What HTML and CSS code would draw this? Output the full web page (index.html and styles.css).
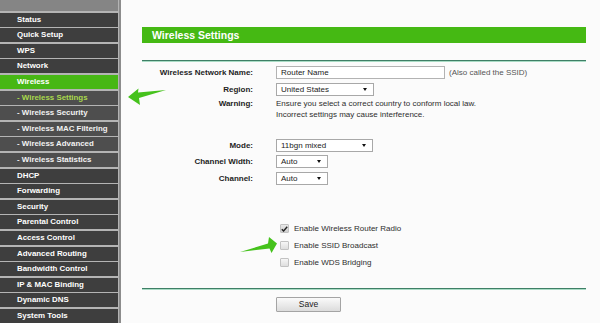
FILE: index.html
```html
<!DOCTYPE html>
<html lang="en">
<head>
    <meta charset="UTF-8">
    <title>Wireless Settings</title>
    <link rel="stylesheet" href="styles.css">
</head>
<body>
    <div class="page">
        <nav class="sidebar">
            <div class="sidebar-top"></div>
            <a class="menu-item">Status</a>
            <a class="menu-item">Quick Setup</a>
            <a class="menu-item">WPS</a>
            <a class="menu-item">Network</a>
            <a class="menu-item active">Wireless</a>
            <a class="menu-item sub current">- Wireless Settings</a>
            <a class="menu-item sub">- Wireless Security</a>
            <a class="menu-item sub">- Wireless MAC Filtering</a>
            <a class="menu-item sub">- Wireless Advanced</a>
            <a class="menu-item sub">- Wireless Statistics</a>
            <a class="menu-item">DHCP</a>
            <a class="menu-item">Forwarding</a>
            <a class="menu-item">Security</a>
            <a class="menu-item">Parental Control</a>
            <a class="menu-item">Access Control</a>
            <a class="menu-item">Advanced Routing</a>
            <a class="menu-item">Bandwidth Control</a>
            <a class="menu-item">IP &amp; MAC Binding</a>
            <a class="menu-item">Dynamic DNS</a>
            <a class="menu-item">System Tools</a>
        </nav>

        <main class="content">
            <div class="title-bar">Wireless Settings</div>
            <div class="divider"></div>

            <div class="row row-name">
                <label class="label">Wireless Network Name:</label>
                <div class="field">
                    <div class="text-input">Router Name</div>
                    <span class="hint">(Also called the SSID)</span>
                </div>
            </div>
            <div class="row row-region">
                <label class="label">Region:</label>
                <div class="field">
                    <div class="select w-region">United States<span class="caret"></span></div>
                </div>
            </div>
            <div class="row row-warning">
                <label class="label">Warning:</label>
                <div class="field warning-text">
                    Ensure you select a correct country to conform local law.<br>
                    Incorrect settings may cause interference.
                </div>
            </div>

            <div class="row row-mode">
                <label class="label">Mode:</label>
                <div class="field">
                    <div class="select w-mode">11bgn mixed<span class="caret"></span></div>
                </div>
            </div>
            <div class="row row-width">
                <label class="label">Channel Width:</label>
                <div class="field">
                    <div class="select w-small">Auto<span class="caret"></span></div>
                </div>
            </div>
            <div class="row row-channel">
                <label class="label">Channel:</label>
                <div class="field">
                    <div class="select w-small">Auto<span class="caret"></span></div>
                </div>
            </div>

            <div class="checks">
                <div class="check-row">
                    <span class="checkbox checked">
                        <svg width="7" height="6" viewBox="0 0 7 6"><path d="M0.8 3.2 L2.6 5 L6.2 0.8" fill="none" stroke="#222" stroke-width="1.4"/></svg>
                    </span>
                    Enable Wireless Router Radio
                </div>
                <div class="check-row">
                    <span class="checkbox"></span>
                    Enable SSID Broadcast
                </div>
                <div class="check-row">
                    <span class="checkbox"></span>
                    Enable WDS Bridging
                </div>
            </div>

            <div class="divider bottom"></div>

            <div class="actions">
                <button class="save-btn">Save</button>
            </div>
        </main>

        <!-- green pointer arrows drawn over the page -->
        <svg class="arrow arrow-menu" width="44" height="22" viewBox="0 0 44 22">
            <path d="M0 9 L10.5 0.5 L10 4.5 L38 2 L11 10 L12 17 Z" fill="#45c21c"/>
        </svg>
        <svg class="arrow arrow-ssid" width="40" height="20" viewBox="0 0 40 20">
            <path d="M0 16 L28 7.5 L29 1 L37 7.5 L31.5 17 L29.5 12.5 Z" fill="#45c21c"/>
        </svg>
    </div>
</body>
</html>
```

FILE: styles.css
```css
/* router admin page - wireless settings */
body {
    margin: 0;
    font-family: "Liberation Sans", Arial, sans-serif;
    background-color: #fbfbfb;
}

.page {
    position: relative;
    display: flex;
    height: 323px;
    overflow: hidden;
}

/* left menu */
.sidebar {
    width: 118px;
    flex-shrink: 0;
    display: flex;
    flex-direction: column;
    background-color: #b4b4b4; /* shows through as separators */
    padding-right: 1px;
    border-right: 2px solid #8c8c8c;
}

.sidebar-top {
    height: 11px;
    flex-shrink: 0;
    background-color: #858585;
}

.menu-item {
    display: block;
    flex-shrink: 0;
    height: 14px;
    margin-top: 1.6px;
    padding-left: 17px;
    line-height: 14px;
    font-size: 7.9px;
    font-weight: bold;
    color: #fff;
    background-color: #3e3e3e;
    white-space: nowrap;
}

.menu-item.sub {
    background-color: #4e4e4e;
    color: #f2f2f2;
}

.menu-item.active {
    background-color: #47b714;
}

.menu-item.current {
    color: #a9d94c;
}

/* right side */
.content {
    flex: 1;
    padding: 27px 14px 0 21px;
}

.title-bar {
    height: 16px;
    line-height: 16px;
    padding-left: 10px;
    background-color: #45b913;
    color: #fff;
    font-size: 10.5px;
    font-weight: bold;
}

.divider {
    margin-top: 17px;
    height: 1px;
    background-color: #3f7f66;
    border-bottom: 1px solid #a9dcc5;
}

.divider.bottom {
    margin-top: 17px;
}

.row {
    display: flex;
    align-items: flex-start;
    font-size: 8px;
    line-height: 13px;
}

.label {
    width: 111px;
    flex-shrink: 0;
    text-align: right;
    font-weight: bold;
    color: #1e1e1e;
}

.field {
    margin-left: 23px;
    display: flex;
    align-items: center;
    color: #2e2e2e;
}

.row-name { margin-top: 4px; }
.row-region { margin-top: 4px; }
.row-warning { margin-top: 2px; line-height: 11px; }
.row-mode { margin-top: 19px; }
.row-width { margin-top: 3px; }
.row-channel { margin-top: 4px; }

.warning-text {
    display: block;
    line-height: 11px;
}

.text-input {
    box-sizing: border-box;
    width: 169px;
    height: 13px;
    line-height: 11px;
    padding-left: 4px;
    border: 1px solid #b3b3b3;
    background-color: #fff;
    color: #222;
}

.hint {
    margin-left: 4px;
    color: #555;
}

.select {
    position: relative;
    box-sizing: border-box;
    height: 13px;
    line-height: 11px;
    padding-left: 4px;
    border: 1px solid #a8a8a8;
    background-color: #fff;
    color: #222;
}

.w-region { width: 98px; }
.w-mode { width: 97px; }
.w-small { width: 52px; }

.caret {
    position: absolute;
    right: 6px;
    top: 4px;
    width: 0;
    height: 0;
    border-left: 2px solid transparent;
    border-right: 2px solid transparent;
    border-top: 3px solid #111;
}

/* checkboxes */
.checks {
    margin-top: 35px;
    margin-left: 138px;
}

.check-row {
    display: flex;
    align-items: center;
    height: 17px;
    font-size: 8px;
    color: #2e2e2e;
}

.checkbox {
    box-sizing: border-box;
    width: 9px;
    height: 9px;
    margin-right: 5px;
    border: 1px solid #c2c2c2;
    border-radius: 1px;
    background: linear-gradient(#f6f6f6, #dedede);
    display: flex;
    align-items: center;
    justify-content: center;
}

.checkbox.checked {
    background: linear-gradient(#e8e8e8, #cfcfcf);
}

.actions {
    margin-top: 3px;
    padding-left: 134px;
}

.save-btn {
    width: 65px;
    height: 15px;
    padding: 0;
    font-family: "Liberation Sans", Arial, sans-serif;
    font-size: 8.5px;
    color: #222;
    border: 1px solid #a4a4a4;
    border-radius: 1px;
    background: linear-gradient(#fafafa, #dcdcdc);
}

.arrow {
    position: absolute;
}

.arrow-menu {
    left: 128px;
    top: 88px;
}

.arrow-ssid {
    left: 240px;
    top: 236px;
}
```
